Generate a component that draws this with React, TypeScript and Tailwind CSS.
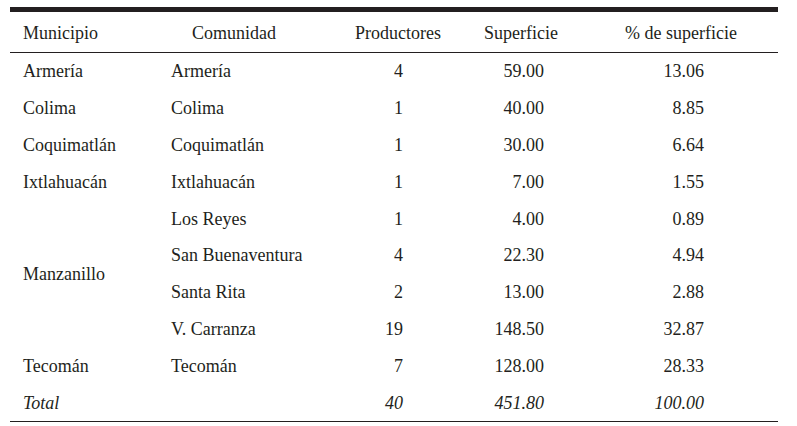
const rows = [
  { mun: "Armería", com: "Armería", prod: "4", sup: "59.00", pct: "13.06" },
  { mun: "Colima", com: "Colima", prod: "1", sup: "40.00", pct: "8.85" },
  { mun: "Coquimatlán", com: "Coquimatlán", prod: "1", sup: "30.00", pct: "6.64" },
  { mun: "Ixtlahuacán", com: "Ixtlahuacán", prod: "1", sup: "7.00", pct: "1.55" },
  { mun: "Manzanillo", span: 4, com: "Los Reyes", prod: "1", sup: "4.00", pct: "0.89" },
  { com: "San Buenaventura", prod: "4", sup: "22.30", pct: "4.94" },
  { com: "Santa Rita", prod: "2", sup: "13.00", pct: "2.88" },
  { com: "V. Carranza", prod: "19", sup: "148.50", pct: "32.87" },
  { mun: "Tecomán", com: "Tecomán", prod: "7", sup: "128.00", pct: "28.33" },
];

const cols = "grid grid-cols-[161px_169px_120px_140px_178px]";

export default function App() {
  return (
    <div className="w-[797px] h-[426px] bg-white pt-[7px] pl-[10px] text-[18px] leading-none text-[#231f20] font-['Liberation_Serif',serif]">
      <div className="w-[768px]">
        <div className="h-[5px] bg-[#231f20]" />
        {/* encabezado */}
        <div className={`${cols} h-[40px] items-center pt-[2px]`}>
          <div className="pl-[13px]">Municipio</div>
          <div className="pl-[21px]">Comunidad</div>
          <div className="pl-[15px]">Productores</div>
          <div className="pl-[24px]">Superficie</div>
          <div className="pl-[25px]">% de superficie</div>
        </div>
        <div className="h-px bg-[#231f20]" />
        <div className={`${cols} auto-rows-[36.8px] items-center`}>
          {rows.map((r, i) => (
            <>
              {r.mun && (
                <div
                  key={"m" + i}
                  className={`pl-[13px] self-stretch flex items-center ${r.span ? "row-span-4" : ""}`}
                >
                  {r.mun}
                </div>
              )}
              <div key={"c" + i}>{r.com}</div>
              <div key={"p" + i} className="text-right pr-[57px]">{r.prod}</div>
              <div key={"s" + i} className="text-right pr-[56px]">{r.sup}</div>
              <div key={"t" + i} className="text-right pr-[74px]">{r.pct}</div>
            </>
          ))}
          <div className="pl-[13px] italic">Total</div>
          <div />
          <div className="text-right pr-[57px] italic">40</div>
          <div className="text-right pr-[56px] italic">451.80</div>
          <div className="text-right pr-[74px] italic">100.00</div>
        </div>
        <div className="h-px bg-[#231f20]" />
      </div>
    </div>
  );
}
